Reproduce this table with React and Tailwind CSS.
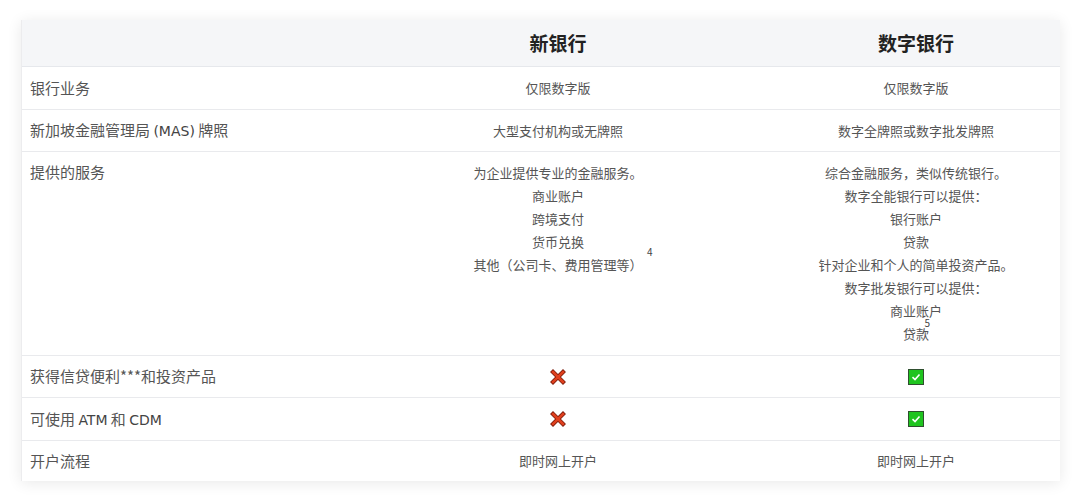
import React from "react";

const font = { fontFamily: '"Noto Sans CJK SC", "Noto Sans", sans-serif' };
const labelFont = { fontFamily: '"DejaVu Sans", "Noto Sans CJK SC", sans-serif' };

function XIcon() {
  return (
    <svg width="16" height="16" viewBox="0 0 16 16" className="inline-block">
      <path d="M3 3 L13 13 M13 3 L3 13" stroke="#7a1a0a" strokeWidth="4.2" strokeLinecap="square" />
      <path d="M3 3 L13 13 M13 3 L3 13" stroke="#e0401e" strokeWidth="2.6" strokeLinecap="square" />
    </svg>
  );
}

function CheckIcon() {
  return (
    <svg width="16" height="16" viewBox="0 0 16 16" className="inline-block">
      <rect x="0.5" y="0.5" width="15" height="15" fill="#1fc41f" stroke="#2f4f2f" />
      <path d="M4.5 8.2 L7 10.5 L11.5 5.5" stroke="#ffffff" strokeWidth="1.6" fill="none" />
    </svg>
  );
}

function Label({ children }) {
  return <span className="text-[15px] text-[#555]">{children}</span>;
}

function Row({ label, c1, c2, h, last }) {
  return (
    <div className={`grid grid-cols-[323px_426px_290px] ${h} ${last ? "" : "border-b border-[#e9eaed]"}`}>
      <div className="px-[8px] flex items-center text-[15px] text-[#555]">{label}</div>
      <div className="flex items-center justify-center text-[13px] text-[#555]">{c1}</div>
      <div className="flex items-center justify-center text-[13px] text-[#555]">{c2}</div>
    </div>
  );
}

const Latin = ({ children }) => (
  <span className="text-[14px] text-[#444]" style={labelFont}>{children}</span>
);

export default function App() {
  return (
    <div className="bg-white w-[1080px] h-[499px] pt-[20px] pl-[21px]" style={font}>
      <div className="w-[1039px] bg-white border-l border-[#ececee] shadow-[0_2px_14px_rgba(0,0,0,0.09)]">
        <div className="grid grid-cols-[323px_426px_290px] h-[47px] bg-[#f5f6f8] border-b border-[#e6e8ec]">
          <div />
          <div className="flex items-center justify-center text-[19px] font-bold text-[#222]">新银行</div>
          <div className="flex items-center justify-center text-[19px] font-bold text-[#222]">数字银行</div>
        </div>
        <Row h="h-[43px]" label="银行业务" c1="仅限数字版" c2="仅限数字版" />
        <Row
          h="h-[42px]"
          label={<span>新加坡金融管理局 <Latin>(MAS)</Latin> 牌照</span>}
          c1="大型支付机构或无牌照"
          c2="数字全牌照或数字批发牌照"
        />
        <div className="grid grid-cols-[323px_426px_290px] h-[204px] border-b border-[#e9eaed]">
          <div className="px-[8px] pt-[10px] text-[15px] leading-[20px] text-[#555]">提供的服务</div>
          <div className="pt-[9px] text-center text-[13px] leading-[23px] text-[#555]">
            <div>为企业提供专业的金融服务。</div>
            <div>商业账户</div>
            <div>跨境支付</div>
            <div>货币兑换</div>
            <div>
              <span className="relative">
                其他（公司卡、费用管理等）
                <span className="absolute -right-[10px] -top-[9px] text-[10px] leading-[12px] text-[#444]">4</span>
              </span>
            </div>
          </div>
          <div className="pt-[9px] text-center text-[13px] leading-[23px] text-[#555]">
            <div>综合金融服务，类似传统银行。</div>
            <div>数字全能银行可以提供：</div>
            <div>银行账户</div>
            <div>贷款</div>
            <div>针对企业和个人的简单投资产品。</div>
            <div>数字批发银行可以提供：</div>
            <div>商业账户</div>
            <div>
              <span className="relative">
                贷款
                <span className="absolute right-[-1px] -top-[6px] text-[10px] leading-[10px] text-[#444]">5</span>
              </span>
            </div>
          </div>
        </div>
        <Row h="h-[42px]" label="获得信贷便利***和投资产品" c1={<XIcon />} c2={<CheckIcon />} />
        <Row
          h="h-[43px]"
          label={<span>可使用 <Latin>ATM</Latin> 和 <Latin>CDM</Latin></span>}
          c1={<XIcon />}
          c2={<CheckIcon />}
        />
        <Row h="h-[40px]" last label="开户流程" c1="即时网上开户" c2="即时网上开户" />
      </div>
    </div>
  );
}
